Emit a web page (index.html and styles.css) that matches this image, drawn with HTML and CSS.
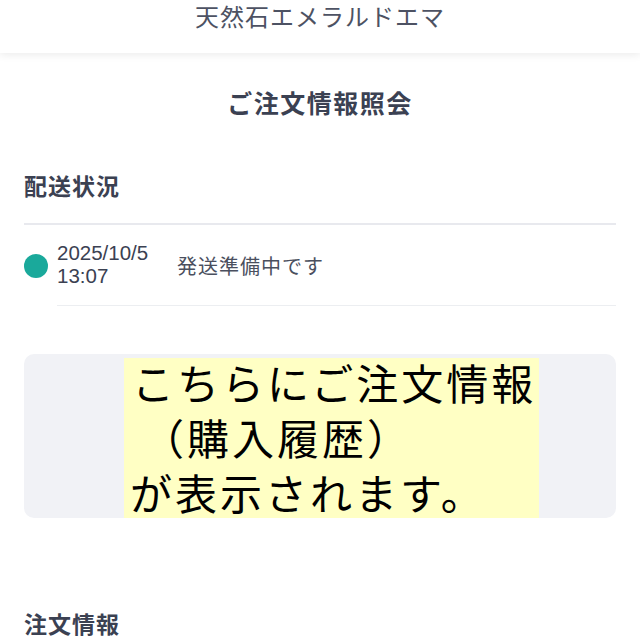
FILE: index.html
```html
<html>
<head>
    <title>ご注文情報照会</title>
    <meta http-equiv="Content-Type" content="text/html;charset=UTF-8"/>
    <link rel="stylesheet" href="styles.css">
</head>
<body>
<div class="shop-header">天然石エメラルドエマ</div>
<h2 class="page-title">ご注文情報照会</h2>
<div class="section">
    <h3 class="section-title">配送状況</h3>
    <div class="status-list">
        <div class="status-row">
            <span class="status-dot"></span>
            <div class="status-date">2025/10/5<br>13:07</div>
            <div class="status-text">発送準備中です</div>
        </div>
    </div>
    <div class="history-box">
        <div class="history-note">
            <p class="note-first">こちらにご注文情報</p>
            <p class="note-second">（購入履歴）</p>
            <p>が表示されます。</p>
        </div>
    </div>
    <h3 class="section-title order-title">注文情報</h3>
</div>
</body>
</html>
```

FILE: styles.css
```css
body {
    margin: 0;
    background-color: #fff;
    color: #3b4152;
    font-family: "Liberation Sans", "Noto Sans CJK JP", sans-serif;
    font-size: 20px;
}

.shop-header {
    height: 53px;
    padding-top: 4px;
    box-sizing: border-box;
    text-align: center;
    font-size: 24px;
    letter-spacing: 1px;
    line-height: 28px;
    color: #4d5263;
    background-color: #fff;
    box-shadow: 0 2px 8px rgba(0, 0, 0, .08);
}

.page-title {
    margin: 36px 0 0;
    text-align: center;
    font-size: 25px;
    line-height: 30px;
    letter-spacing: 1.5px;
    font-weight: bold;
}

.section {
    padding: 0 24px;
}

.section-title {
    margin: 0;
    font-size: 23px;
    line-height: 28px;
    letter-spacing: 1px;
    font-weight: bold;
}

.section > .section-title:first-child {
    margin-top: 54px;
}

.status-list {
    margin-top: 22px;
    border-top: solid 2px #e8e9ee;
}

.status-row {
    display: flex;
    align-items: center;
    height: 80px;
    border-bottom: solid 1px #eceef1;
    margin-left: 33px;
    position: relative;
}

.status-dot {
    position: absolute;
    left: -33px;
    top: 29px;
    width: 24px;
    height: 24px;
    border-radius: 50%;
    background-color: #1aa99b;
}

.status-date {
    width: 120px;
    font-size: 20.5px;
    line-height: 23px;
    margin-top: -2px;
}

.status-text {
    color: #4a4f5e;
    letter-spacing: 1px;
}

.history-box {
    margin-top: 48px;
    height: 164px;
    border-radius: 10px;
    background-color: #f1f2f6;
    padding: 4px 0 0 100px;
    box-sizing: border-box;
}

.history-note {
    width: 415px;
    height: 160px;
    background-color: #ffffc4;
    color: #000;
    font-size: 42px;
    line-height: 55px;
    letter-spacing: 3px;
    box-sizing: border-box;
}

.history-note p {
    margin: 0;
    padding-left: 6px;
}

.history-note .note-first {
    padding-left: 8px;
}

.history-note .note-second {
    padding-left: 18px;
}

.order-title {
    margin-top: 93px;
}
```
